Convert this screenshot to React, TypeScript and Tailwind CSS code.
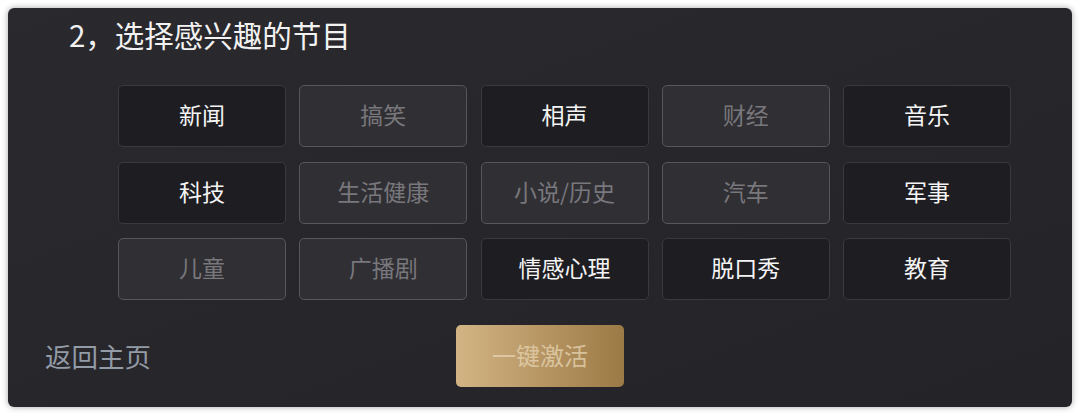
import React from "react";

const items: { label: string; active: boolean }[] = [
  { label: "新闻", active: true },
  { label: "搞笑", active: false },
  { label: "相声", active: true },
  { label: "财经", active: false },
  { label: "音乐", active: true },
  { label: "科技", active: true },
  { label: "生活健康", active: false },
  { label: "小说/历史", active: false },
  { label: "汽车", active: false },
  { label: "军事", active: true },
  { label: "儿童", active: false },
  { label: "广播剧", active: false },
  { label: "情感心理", active: true },
  { label: "脱口秀", active: true },
  { label: "教育", active: true },
];

export default function App() {
  return (
    <div
      className="w-[1080px] h-[415px] bg-white pt-[8px] pl-[8px]"
      style={{ fontFamily: '"Noto Sans CJK SC", "Noto Sans", sans-serif' }}
    >
      <div className="w-[1064px] h-[399px] rounded-[6px] bg-gradient-to-br from-[#2a292e] via-[#27262b] to-[#242328] shadow-[0_0_6px_rgba(0,0,0,0.35)] pt-[6px] flex flex-col">
        <div className="pl-[61px] text-[29.5px] leading-[40px] text-[#f2f2f2]">
          2，选择感兴趣的节目
        </div>
        <div className="mt-[31px] pl-[110px] grid grid-cols-[repeat(5,168px)] auto-rows-[62px] gap-x-[13.25px] gap-y-[14.5px]">
          {items.map((it) => (
            <div
              key={it.label}
              className={
                it.active
                  ? "flex items-center justify-center pb-[3px] rounded-[5px] border border-[#3a393e] bg-[#1e1d22] text-[23px] text-[#f4f4f4]"
                  : "flex items-center justify-center pb-[3px] rounded-[5px] border border-[#57565b] bg-[#302f34] text-[23px] text-[#78777c]"
              }
            >
              {it.label}
            </div>
          ))}
        </div>
        <div className="mt-[25px] px-[37px] grid grid-cols-[1fr_auto_1fr] items-center">
          <div className="text-[26.5px] leading-[36px] text-[#929ba6]">返回主页</div>
          <div className="w-[168px] h-[62px] pb-[2px] rounded-[5px] bg-gradient-to-r from-[#d3b484] to-[#9c7a45] flex items-center justify-center text-[24px] text-[#e4d2b0]/80">
            一键激活
          </div>
          <div />
        </div>
      </div>
    </div>
  );
}
